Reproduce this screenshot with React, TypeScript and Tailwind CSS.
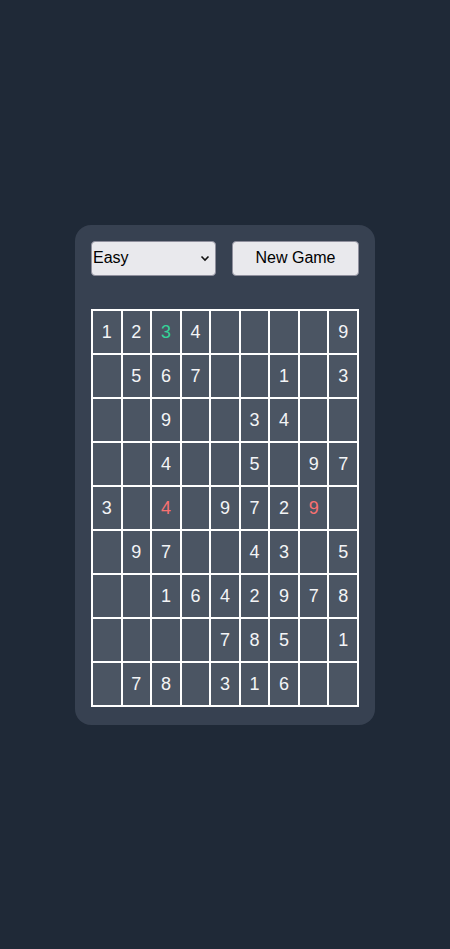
import React from "react";

const board: (number | null)[][] = [
  [1, 2, 3, 4, null, null, null, null, 9],
  [null, 5, 6, 7, null, null, 1, null, 3],
  [null, null, 9, null, null, 3, 4, null, null],
  [null, null, 4, null, null, 5, null, 9, 7],
  [3, null, 4, null, 9, 7, 2, 9, null],
  [null, 9, 7, null, null, 4, 3, null, 5],
  [null, null, 1, 6, 4, 2, 9, 7, 8],
  [null, null, null, null, 7, 8, 5, null, 1],
  [null, 7, 8, null, 3, 1, 6, null, null],
];

const green = new Set(["0-2"]);
const red = new Set(["4-2", "4-7"]);

export default function App() {
  return (
    <div
      className="min-h-screen w-full bg-[#1f2937] flex items-center justify-center"
      style={{ fontFamily: '"Liberation Sans", Arial, sans-serif' }}
    >
      <div className="w-[300px] bg-[#374151] rounded-2xl pt-4 px-4 pb-[18px]">
        <div className="flex gap-4">
          <div className="relative flex-1">
            <select className="appearance-none w-full h-[35px] bg-[#e9e9ed] text-black text-base border border-[#8f8f9d] rounded-[4px] pl-[1px] pr-6 outline-none">
              <option>Easy</option>
              <option>Medium</option>
              <option>Hard</option>
            </select>
            <svg
              className="absolute right-[6px] top-[14px] pointer-events-none"
              width="10"
              height="7"
              viewBox="0 0 10 7"
            >
              <path d="M1.5 1.5 L5 5 L8.5 1.5" fill="none" stroke="#111" strokeWidth="1.6" />
            </svg>
          </div>
          <button className="flex-1 h-[35px] bg-[#e9e9ed] text-black text-base border border-[#8f8f9d] rounded-[4px]">
            New Game
          </button>
        </div>
        <div className="mt-[33px] grid grid-cols-9 gap-[2px] bg-white border-2 border-white">
          {board.map((row, r) =>
            row.map((v, c) => {
              const key = `${r}-${c}`;
              const color = green.has(key)
                ? "text-[#34d399]"
                : red.has(key)
                ? "text-[#f87171]"
                : "text-[#f3f4f6]";
              return (
                <div
                  key={key}
                  className={`h-[42px] bg-[#4b5563] flex items-center justify-center text-lg ${color}`}
                >
                  {v ?? ""}
                </div>
              );
            })
          )}
        </div>
      </div>
    </div>
  );
}
